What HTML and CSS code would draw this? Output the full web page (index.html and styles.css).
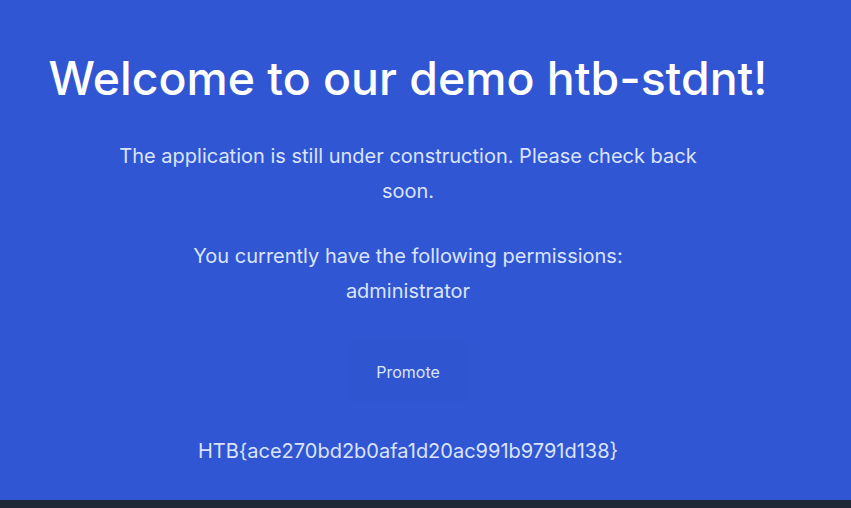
FILE: index.html
```html
<!DOCTYPE html>
<html>
<head>
<meta charset="utf-8">
<link rel="stylesheet" href="styles.css">
</head>
<body>
<main class="page">
  <div class="content">
    <h1 class="title">Welcome to our demo htb-stdnt!</h1>
    <p class="text intro">The application is still under construction. Please check back soon.</p>
    <p class="text perms">You currently have the following permissions:<br>administrator</p>
    <button class="btn">Promote</button>
    <p class="flag">HTB{ace270bd2b0afa1d20ac991b9791d138}</p>
  </div>
</main>
<footer class="bar"></footer>
</body>
</html>
```
FILE: styles.css
```css
html, body {
  margin: 0;
  padding: 0;
}
body {
  background: #1f2937;
  font-family: Inter, "Noto Sans", sans-serif;
  width: 851px;
  height: 508px;
  overflow: hidden;
}
.page {
  background: #3056d3;
  height: 500px;
}
.content {
  width: 816px;
  display: flex;
  flex-direction: column;
  align-items: center;
  text-align: center;
  padding-top: 48px;
}
.title {
  margin: 0;
  color: #ffffff;
  font-size: 46.4px;
  font-weight: 500;
  line-height: 60px;
}
.text {
  margin: 0;
  max-width: 600px;
  color: #dbe4ff;
  font-size: 20px;
  line-height: 35px;
}
.intro {
  margin-top: 31px;
}
.perms {
  margin-top: 30px;
}
.btn {
  margin-top: 32px;
  width: 121px;
  height: 61px;
  border: none;
  background: #2f55d0;
  color: #dbe4ff;
  font-family: Inter, "Noto Sans", sans-serif;
  font-size: 16px;
}
.flag {
  margin: 32px 0 0;
  color: #dbe4ff;
  font-size: 20px;
  line-height: 35px;
}
```
